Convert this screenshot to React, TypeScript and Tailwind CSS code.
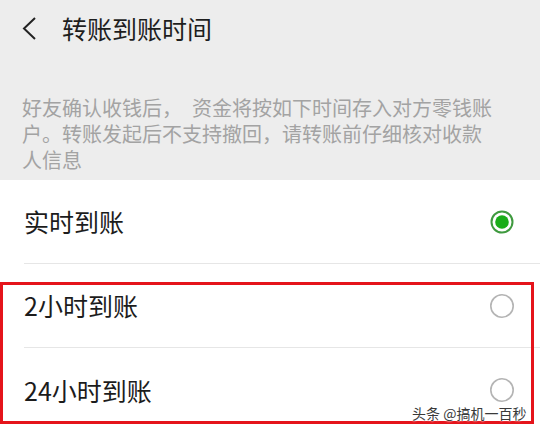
import React from "react";

const font = { fontFamily: '"Noto Sans CJK SC", "Noto Sans", sans-serif' };

function Radio({ checked }: { checked: boolean }) {
  return checked ? (
    <svg width="26" height="26" viewBox="0 0 26 26">
      <circle cx="13" cy="13" r="10.5" fill="#ffffff" stroke="#3f9a3f" strokeWidth="2" />
      <circle cx="13" cy="13" r="6.8" fill="#1aad19" />
    </svg>
  ) : (
    <svg width="26" height="26" viewBox="0 0 26 26">
      <circle cx="13" cy="13" r="11.2" fill="#ffffff" stroke="#b4b4b4" strokeWidth="1.6" />
    </svg>
  );
}

function Row({ label, checked, divider }: { label: string; checked: boolean; divider: boolean }) {
  return (
    <div className="pl-6">
      <div
        className={
          "h-[84px] flex items-center justify-between pr-[25px] " +
          (divider ? "border-b border-[#e6e6e6]" : "")
        }
      >
        <span className="text-[25px] text-[#1c1c1c] leading-none">{label}</span>
        <Radio checked={checked} />
      </div>
    </div>
  );
}

export default function App() {
  return (
    <div className="relative w-[540px] h-[431px] overflow-hidden bg-white" style={font}>
      <div className="bg-[#ededed]">
        <div className="h-[56px] flex items-center pl-[22px]">
          <svg width="16" height="24" viewBox="0 0 16 24" className="mr-[24px]">
            <path d="M13 2 L2 12.5 L13 23" fill="none" stroke="#222" strokeWidth="2" strokeLinejoin="miter" />
          </svg>
          <span className="text-[25px] text-[#1e1e1e] leading-none">转账到账时间</span>
        </div>
        <div className="pt-[39px] pb-[7px] pl-[22px] text-[20px] leading-[26px] text-[#a3a3a3]">
          好友确认收钱后，<span className="inline-block w-[10px]"></span>资金将按如下时间存入对方零钱账
          <br />
          户。转账发起后不支持撤回，请转账前仔细核对收款
          <br />
          人信息
        </div>
      </div>
      <div className="bg-white">
        <Row label="实时到账" checked={true} divider={true} />
        <Row label="2小时到账" checked={false} divider={true} />
        <Row label="24小时到账" checked={false} divider={false} />
      </div>
      <div className="absolute left-0 top-[282px] w-[534px] h-[142px] border-[3px] border-[#e5141b] pointer-events-none"></div>
      <div
        className="absolute left-[412px] top-[404px] text-[14px] leading-[18px] text-[#3a3a3a] whitespace-nowrap"
        style={{ textShadow: "0 0 2px #fff, 0 0 2px #fff" }}
      >
        头条 @搞机一百秒
      </div>
    </div>
  );
}
